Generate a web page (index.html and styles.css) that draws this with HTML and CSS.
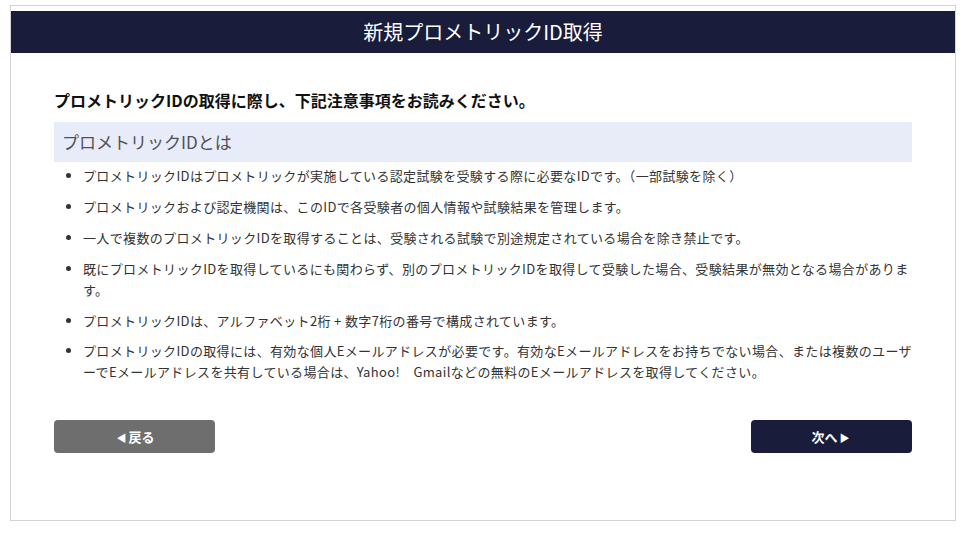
FILE: index.html
```html
<!DOCTYPE html>
<html lang="ja">
<head>
    <meta charset="UTF-8">
    <meta name="viewport" content="width=device-width, initial-scale=1.0">
    <title>新規プロメトリックID取得</title>
    <link rel="stylesheet" href="styles.css">
</head>
<body>
    <div class="frame">
        <h1 class="title-bar">新規プロメトリックID取得</h1>
        <div class="content">
            <p class="lead">プロメトリックIDの取得に際し、下記注意事項をお読みください。</p>
            <h2 class="section-title">プロメトリックIDとは</h2>
            <ul class="notes">
                <li>プロメトリックIDはプロメトリックが実施している認定試験を受験する際に必要なIDです。（一部試験を除く）</li>
                <li>プロメトリックおよび認定機関は、このIDで各受験者の個人情報や試験結果を管理します。</li>
                <li>一人で複数のプロメトリックIDを取得することは、受験される試験で別途規定されている場合を除き禁止です。</li>
                <li>既にプロメトリックIDを取得しているにも関わらず、別のプロメトリックIDを取得して受験した場合、受験結果が無効となる場合があります。</li>
                <li>プロメトリックIDは、アルファベット2桁 + 数字7桁の番号で構成されています。</li>
                <li>プロメトリックIDの取得には、有効な個人Eメールアドレスが必要です。有効なEメールアドレスをお持ちでない場合、または複数のユーザーでEメールアドレスを共有している場合は、Yahoo!　Gmailなどの無料のEメールアドレスを取得してください。</li>
            </ul>
            <div class="actions">
                <button class="btn btn-back"><span class="arrow">&#9664;</span>戻る</button>
                <button class="btn btn-next">次へ<span class="arrow">&#9654;</span></button>
            </div>
        </div>
    </div>
</body>
</html>
```

FILE: styles.css
```css
body {
    margin: 0;
    padding: 5px 20px 13px 10px;
    font-family: "Noto Sans CJK JP", "Noto Sans", sans-serif;
    color: #333333;
    background-color: #ffffff;
}

.frame {
    border: 1px solid #d3d3d3;
    padding-top: 5px;
    min-height: 516px;
    box-sizing: border-box;
}

.title-bar {
    margin: 0;
    height: 42px;
    line-height: 42px;
    background-color: #191c3a;
    color: #ffffff;
    text-align: center;
    font-size: 20px;
    font-weight: normal;
}

.content {
    padding: 35px 43px 40px;
}

.lead {
    margin: 0 0 10px;
    font-size: 16px;
    font-weight: bold;
    line-height: 24px;
    color: #111111;
}

.section-title {
    margin: 0;
    height: 40px;
    line-height: 40px;
    padding: 0 8px;
    background-color: #e8ecf8;
    font-size: 17px;
    font-weight: normal;
    color: #505058;
}

.notes {
    margin: 3px 0 0;
    padding-left: 29px;
    font-size: 13px;
    line-height: 21px;
    letter-spacing: 0.35px;
}

.notes li {
    margin-bottom: 9.9px;
}

.actions {
    display: flex;
    justify-content: space-between;
    margin-top: 38px;
}

.btn {
    width: 161px;
    height: 33px;
    border: none;
    border-radius: 4px;
    color: #ffffff;
    font-family: inherit;
    font-size: 13px;
    font-weight: bold;
    cursor: pointer;
}

.btn-back {
    background-color: #6e6e6e;
}

.btn-next {
    background-color: #191c3a;
}

.arrow {
    font-size: 10px;
    margin: 0 2px;
}
```
